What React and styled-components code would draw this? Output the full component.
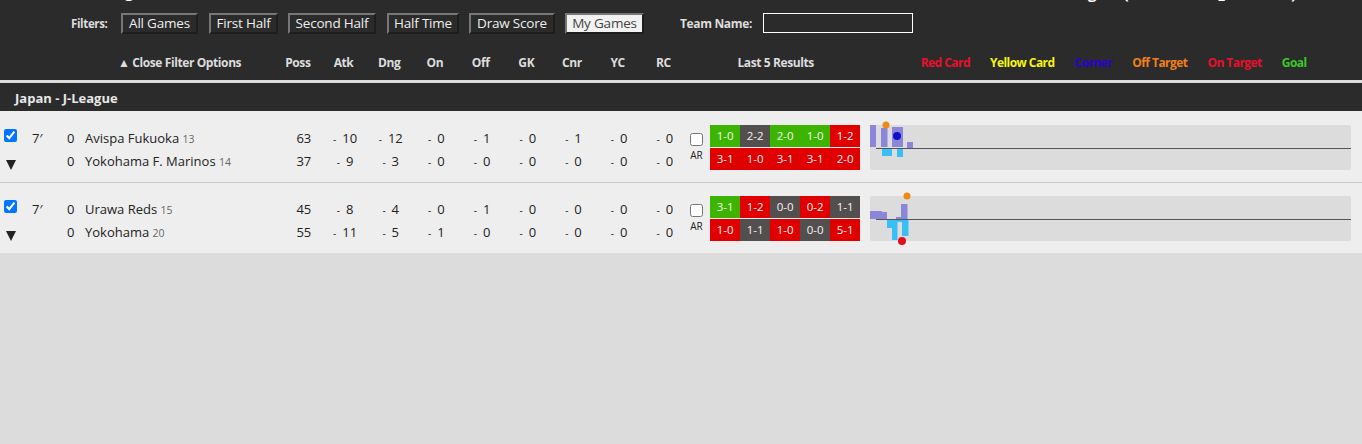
import React from "react";
import styled, { createGlobalStyle } from "styled-components";

const Global = createGlobalStyle`
  html, body { margin: 0; padding: 0; background: #dcdcdc; }
  body { font-family: "Open Sans", "Liberation Sans", sans-serif; width: 1362px; height: 444px; overflow: hidden; }
`;
const Header = styled.header`
  background: #2b2b2b; height: 80px; color: #e6e6e6; display: flex; flex-direction: column;
`;
const Clip = styled.div`
  height: 12px; overflow: hidden; display: flex; justify-content: space-between; align-items: flex-start;
`;
const ClipText = styled.span`
  font: 700 15px/20px "Open Sans", sans-serif; color: #fff; margin-top: ${p => p.$top}px; white-space: pre;
  margin-left: ${p => p.$left || 0}px; margin-right: ${p => p.$right || 0}px;
`;
const FilterRow = styled.div`
  display: flex; align-items: center; height: 22px; padding-left: 71px;
`;
const FilterLabel = styled.span`
  font-size: 11.5px; letter-spacing: -0.35px; font-weight: 700; color: #ddd; width: 50px; flex: none;
`;
const FilterBtn = styled.button`
  font: 400 13.5px/17px "Open Sans", sans-serif; letter-spacing: -0.2px; height: 21px; padding: 0; width: ${p => p.$w}px; margin-right: ${p => p.$gap}px;
  flex: none; color: ${p => (p.$active ? "#444" : "#eee")}; background: ${p => (p.$active ? "#f2f2f2" : "#2b2b2b")};
  border: 2px solid; border-color: #777 #1e1e1e #1e1e1e #777;
`;
const TeamLabel = styled(FilterLabel)`
  width: 83px; margin-left: 36px; font-size: 12px;
`;
const TeamInput = styled.input`
  width: 150px; height: 20px; box-sizing: border-box; background: #2b2b2b; border: 1px solid #fff; padding: 0; color: #fff;
`;
const ColumnsRow = styled.div`
  display: flex; align-items: center; height: 17px; margin-top: 20px; font-size: 12px; letter-spacing: -0.4px; font-weight: 700; color: #ddd;
`;
const CloseFilter = styled.div`
  width: 157px; padding-left: 118px; flex: none; white-space: nowrap;
`;
const Stats = styled.div`
  display: grid; grid-template-columns: repeat(9, 45.7px); flex: none;
`;
const Head = styled.span`
  text-align: center; white-space: nowrap;
`;
const LastFive = styled.div`
  width: 179px; text-align: center; flex: none; margin-right: 55.5px;
`;
const Legend = styled.div`
  display: flex; gap: 20px; letter-spacing: -0.55px;
`;
const LegendItem = styled.span`
  color: ${p => p.$c}; white-space: nowrap;
`;
const Strip = styled.div`
  height: 3px; background: #dcdcdc;
`;
const League = styled.div`
  height: 28px; background: #2b2b2b; color: #e8e8e8; font-size: 13px; font-weight: 700; line-height: 31px; padding-left: 15px;
`;
const Row = styled.div`
  display: flex; align-items: flex-start; background: #eee; height: 71px; box-sizing: border-box; padding-top: 14px;
  & + & { border-top: 1px solid #c8c8c8; padding-top: 13px; }
`;
const Selector = styled.div`
  width: 32px; flex: none; display: flex; flex-direction: column; padding-left: 4px; box-sizing: border-box;
`;
const Check = styled.input`
  width: 13px; height: 13px; margin: 4px 0 0; accent-color: #0075ff; display: block;
`;
const Arrow = styled.span`
  display: block; margin: 18px 0 0 2px; width: 0; height: 0; border-left: 5px solid transparent; border-right: 5px solid transparent; border-top: 10px solid #222;
`;
const Lines = styled.div`
  display: flex; flex-direction: column; margin-top: 1px; flex: none;
`;
const Line = styled.div`
  display: flex; height: 23px; align-items: center; color: #222; font-size: 13px;
`;
const Minute = styled.span`
  width: 35px; flex: none;
`;
const Score = styled.span`
  width: 18px; flex: none;
`;
const Team = styled.span`
  width: 191.5px; flex: none; white-space: nowrap;
`;
const Rank = styled.small`
  font-size: 10.5px; color: #666;
`;
const Poss = styled.span`
  text-align: center; padding-left: 9px;
`;
const Stat = styled.span`
  text-align: center; white-space: nowrap;
`;
const Dash = styled.span`
  font-size: 10px; margin-right: 6px;
`;
const ArCol = styled.div`
  width: 22.5px; flex: none; display: flex; flex-direction: column; align-items: center; margin-top: 8px; font-size: 10px; color: #222; padding-right: 5px; box-sizing: border-box;
`;
const ArBox = styled.input`
  width: 13px; height: 13px; margin: 0 0 2px; display: block;
`;
const Results = styled.div`
  display: grid; grid-template-columns: repeat(5, 30px); grid-template-rows: 22px 22px; row-gap: 1px; flex: none; margin-right: 10px;
`;
const Cell = styled.span`
  font-size: 11.5px; line-height: 22px; text-align: center; color: #f4f4f4;
  background: ${p => ({ w: "#3cb400", l: "#e00000", d: "#544f4f" }[p.$r])};
`;
const ChartBox = styled.svg`
  width: 481px; height: 45px; overflow: visible; display: block; flex: none;
`;

const legend = [["Red Card", "#e8102a"], ["Yellow Card", "#f5f514"], ["Corner", "#2a00d0"], ["Off Target", "#f07f1e"], ["On Target", "#e8102a"], ["Goal", "#3cc82a"]];
const heads = ["Poss", "Atk", "Dng", "On", "Off", "GK", "Cnr", "YC", "RC"];
const filters = [["All Games", 77, 11], ["First Half", 69, 10], ["Second Half", 88, 11], ["Half Time", 72, 10], ["Draw Score", 86, 10], ["My Games", 79, 0, true]];

const rows = [
  {
    teams: [
      { name: "Avispa Fukuoka", rank: 13, poss: 63, s: [10, 12, 0, 1, 0, 1, 0, 0] },
      { name: "Yokohama F. Marinos", rank: 14, poss: 37, s: [9, 3, 0, 0, 0, 0, 0, 0] },
    ],
    res: [["1-0", "w"], ["2-2", "d"], ["2-0", "w"], ["1-0", "w"], ["1-2", "l"], ["3-1", "l"], ["1-0", "l"], ["3-1", "l"], ["3-1", "l"], ["2-0", "l"]],
    purple: [[0, 0, 6, 22], [11, 3, 6.5, 19], [22, 2, 11, 20], [37, 17, 6, 6]],
    cyan: [[12, 24, 10, 7], [27, 24, 6, 8]],
    dots: [[16, 0, 3.5, "#f08a14"], [27, 11, 4, "#1010c8"]],
  },
  {
    teams: [
      { name: "Urawa Reds", rank: 15, poss: 45, s: [8, 4, 0, 1, 0, 0, 0, 0] },
      { name: "Yokohama", rank: 20, poss: 55, s: [11, 5, 1, 0, 0, 0, 0, 0] },
    ],
    res: [["3-1", "w"], ["1-2", "l"], ["0-0", "d"], ["0-2", "l"], ["1-1", "d"], ["1-0", "l"], ["1-1", "d"], ["1-0", "l"], ["0-0", "d"], ["5-1", "l"]],
    purple: [[0, 15, 12, 8], [12, 16, 5, 8], [26, 21, 5, 3], [31, 8, 6.5, 15]],
    cyan: [[17, 24, 5, 8], [22, 24, 5.5, 20], [27, 24, 5, 2], [32, 24, 6.5, 16]],
    dots: [[37, 0, 3.5, "#f08a14"], [32, 45, 4, "#e01020"]],
  },
];

const Chart = ({ purple, cyan, dots }) => (
  <ChartBox viewBox="0 0 481 45">
    <rect width="481" height="45" rx="2" fill="#dcdcdc" />
    {purple.map(([x, y, w, h], i) => <rect key={i} x={x} y={y} width={w} height={h} fill="#8b86d8" />)}
    {cyan.map(([x, y, w, h], i) => <rect key={i} x={x} y={y} width={w} height={h} fill="#38bff5" />)}
    <line x1="6" x2="481" y1="23.5" y2="23.5" stroke="#555" strokeWidth="1" />
    {dots.map(([x, y, r, c], i) => <circle key={i} cx={x} cy={y} r={r} fill={c} />)}
  </ChartBox>
);

const Match = ({ m }) => (
  <Row>
    <Selector>
      <Check type="checkbox" defaultChecked />
      <Arrow />
    </Selector>
    <Lines>
      {m.teams.map((t, i) => (
        <Line key={t.name}>
          <Minute>{i === 0 ? "7′" : ""}</Minute>
          <Score>0</Score>
          <Team>{t.name} <Rank>{t.rank}</Rank></Team>
          <Stats>
            <Poss>{t.poss}</Poss>
            {t.s.map((v, j) => <Stat key={j}><Dash>-</Dash>{v}</Stat>)}
          </Stats>
        </Line>
      ))}
    </Lines>
    <ArCol>
      <ArBox type="checkbox" />
      AR
    </ArCol>
    <Results>
      {m.res.map(([v, r], i) => <Cell key={i} $r={r}>{v}</Cell>)}
    </Results>
    <Chart {...m} />
  </Row>
);

const sp = n => "\u00a0".repeat(n);

export default function App() {
  return (
    <>
      <Global />
      <Header>
        <Clip>
          <ClipText $left={125} $top={-18}>g</ClipText>
          <ClipText $right={66} $top={-17}>{`g${sp(7)}(${sp(23)}_${sp(17)})`}</ClipText>
        </Clip>
        <FilterRow>
          <FilterLabel>Filters:</FilterLabel>
          {filters.map(([label, w, gap, active]) => (
            <FilterBtn key={label} $w={w} $gap={gap} $active={active}>{label}</FilterBtn>
          ))}
          <TeamLabel>Team Name:</TeamLabel>
          <TeamInput type="text" />
        </FilterRow>
        <ColumnsRow>
          <CloseFilter>▲ Close Filter Options</CloseFilter>
          <Stats>{heads.map(h => <Head key={h}>{h}</Head>)}</Stats>
          <LastFive>Last 5 Results</LastFive>
          <Legend>{legend.map(([t, c]) => <LegendItem key={t} $c={c}>{t}</LegendItem>)}</Legend>
        </ColumnsRow>
      </Header>
      <Strip />
      <League>Japan - J-League</League>
      {rows.map((m, i) => <Match key={i} m={m} />)}
    </>
  );
}
